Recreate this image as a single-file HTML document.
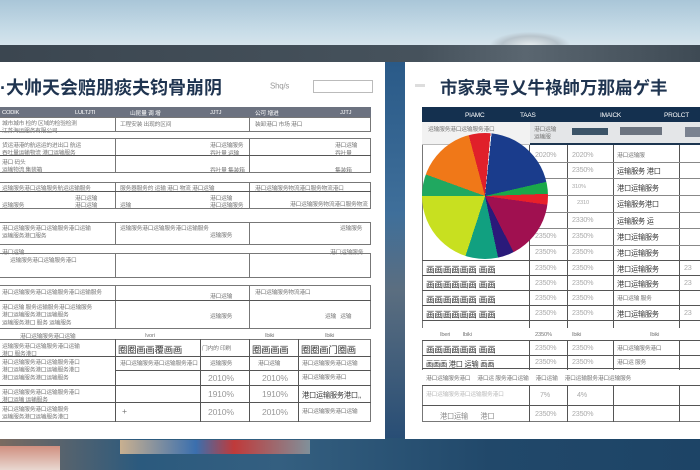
<!DOCTYPE html>
<html><head><meta charset="utf-8"><style>
*{margin:0;padding:0;box-sizing:border-box}
body{width:700px;height:470px;overflow:hidden;position:relative;font-family:"Liberation Sans","Noto Sans CJK SC",sans-serif;background:#1f4b6e}
.a{position:absolute}
.sky{left:0;top:0;width:700px;height:46px;background:linear-gradient(#a9c6d8,#c9dde8 70%,#d6e4ec)}
.band{left:0;top:45px;width:700px;height:18px;background:linear-gradient(90deg,#3b4650,#46525c 60%,#5a6670 75%,#3e4a54)}
.gap{left:385px;top:62px;width:20px;height:380px;background:linear-gradient(#2a5a88,#3f6f9a 40%,#5b6e80 60%,#274d75)}
.water{left:0;top:438px;width:700px;height:32px;background:linear-gradient(90deg,#7a6a60,#2b5a7e 20%,#345f80 40%,#21486a 70%,#1d4466)}
.pan{background:#fff;top:62px;height:377px}
.t{font-size:18px;color:#1f3450;white-space:nowrap;font-weight:bold}
.l{background:#555}
.c{border:1px solid #777;background:#fff}
.x{font-size:8px;color:#777;white-space:nowrap;transform:scale(.72);transform-origin:0 0;letter-spacing:-0.3px}
</style></head><body>
<div class="a sky"></div>
<div class="a" style="left:490px;top:32px;width:80px;height:14px;background:radial-gradient(ellipse at 50% 100%,#e8eef0 0%,#b8c4cc 50%,transparent 72%)"></div>
<div class="a band"></div>
<div class="a gap"></div>
<div class="a water"></div>
<div class="a" style="left:120px;top:440px;width:190px;height:14px;background:linear-gradient(90deg,#c9b090,#3a6fae 40%,#c03a3a 60%,#80909a)"></div>
<div class="a" style="left:0;top:446px;width:60px;height:24px;background:linear-gradient(#d09080,#e8d8d0)"></div>

<!-- left panel -->
<div class="a pan" style="left:0;width:385px"></div>
<div class="a t" style="left:0px;top:74px">·大帅天会赔朋痰夫钧骨崩阴</div>
<div class="a x" style="left:270px;top:82px;font-size:11px;color:#999">Shq/s</div>
<div class="a" style="left:313px;top:80px;width:60px;height:13px;border:1px solid #bbb"></div>
<div class="a" style="left:0;top:107px;width:371px;height:10px;background:#6c7280"></div>
<div class="a x" style="left:2px;top:109px;color:#fff">CODIK</div>
<div class="a x" style="left:75px;top:109px;color:#fff">LULTJTI</div>
<div class="a x" style="left:130px;top:109px;color:#fff">山昆量 调 增</div>
<div class="a x" style="left:210px;top:109px;color:#fff">JJTJ</div>
<div class="a x" style="left:255px;top:109px;color:#fff">公可 增进</div>
<div class="a x" style="left:340px;top:109px;color:#fff">JJTJ</div>
<div class="a c" style="left:-1px;top:117px;width:117px;height:15px"></div>
<div class="a c" style="left:115px;top:117px;width:135px;height:15px"></div>
<div class="a c" style="left:249px;top:117px;width:122px;height:15px"></div>
<div class="a c" style="left:-1px;top:138px;width:117px;height:35px"></div>
<div class="a c" style="left:115px;top:138px;width:135px;height:35px"></div>
<div class="a c" style="left:249px;top:138px;width:122px;height:35px"></div>
<div class="a l" style="left:0;top:155px;width:371px;height:1px"></div>
<div class="a c" style="left:-1px;top:182px;width:117px;height:27px"></div>
<div class="a c" style="left:115px;top:182px;width:135px;height:27px"></div>
<div class="a c" style="left:249px;top:182px;width:122px;height:27px"></div>
<div class="a l" style="left:0;top:191px;width:371px;height:1px"></div>
<div class="a c" style="left:-1px;top:222px;width:117px;height:23px"></div>
<div class="a c" style="left:115px;top:222px;width:135px;height:23px"></div>
<div class="a c" style="left:249px;top:222px;width:122px;height:23px"></div>
<div class="a c" style="left:-1px;top:253px;width:117px;height:25px"></div>
<div class="a c" style="left:115px;top:253px;width:135px;height:25px"></div>
<div class="a c" style="left:249px;top:253px;width:122px;height:25px"></div>
<div class="a c" style="left:-1px;top:285px;width:117px;height:44px"></div>
<div class="a c" style="left:115px;top:285px;width:135px;height:44px"></div>
<div class="a c" style="left:249px;top:285px;width:122px;height:44px"></div>
<div class="a l" style="left:0;top:300px;width:371px;height:1px"></div>
<div class="a x" style="left:2px;top:119px">城市城市 检的 区域的检验检测<br>江苏海运服务有限公司</div>
<div class="a x" style="left:120px;top:120px">工程安装 出现的区间</div>
<div class="a x" style="left:255px;top:120px">装卸港口 市场 港口</div>
<div class="a x" style="left:2px;top:141px">货运港港的航运运的进出口 航运<br>吞吐量运输物流 港口运输服务</div>
<div class="a x" style="left:210px;top:141px">港口运输服务</div><div class="a x" style="left:335px;top:141px">港口运输</div>
<div class="a x" style="left:210px;top:149px">吞吐量 运输</div><div class="a x" style="left:335px;top:149px">吞吐量</div>
<div class="a x" style="left:2px;top:158px">港口 码头<br>运输物流 集装箱</div>
<div class="a x" style="left:210px;top:166px">吞吐量 集装箱</div><div class="a x" style="left:335px;top:166px">集装箱</div>
<div class="a x" style="left:2px;top:184px">运输服务港口运输服务航运运输服务</div>
<div class="a x" style="left:120px;top:184px">服务器服务的 运输 港口 物流 港口运输</div>
<div class="a x" style="left:255px;top:184px">港口运输服务物流港口服务物流港口</div>
<div class="a x" style="left:75px;top:194px">港口运输</div><div class="a x" style="left:210px;top:194px">港口运输</div>
<div class="a x" style="left:2px;top:201px">运输服务</div><div class="a x" style="left:75px;top:201px">港口运输</div>
<div class="a x" style="left:120px;top:201px">运输</div><div class="a x" style="left:210px;top:201px">港口运输服务</div>
<div class="a x" style="left:290px;top:200px">港口运输服务物流港口服务物流</div>
<div class="a x" style="left:2px;top:224px">港口运输服务港口运输服务港口运输<br>运输服务港口服务</div>
<div class="a x" style="left:120px;top:224px">运输服务港口运输服务港口运输服务</div>
<div class="a x" style="left:210px;top:231px">运输服务</div><div class="a x" style="left:340px;top:224px">运输服务</div>
<div class="a x" style="left:2px;top:248px">港口运输</div><div class="a x" style="left:330px;top:248px">港口运输服务</div>
<div class="a x" style="left:10px;top:256px">运输服务港口运输服务港口</div>
<div class="a x" style="left:2px;top:288px">港口运输服务港口运输服务港口运输服务</div>
<div class="a x" style="left:210px;top:292px">港口运输</div><div class="a x" style="left:255px;top:288px">港口运输服务物流港口</div>
<div class="a x" style="left:2px;top:303px">港口运输 服务运输服务港口运输服务<br>港口运输服务港口运输服务<br>运输服务港口 服务 运输服务</div>
<div class="a x" style="left:210px;top:312px">运输服务</div><div class="a x" style="left:325px;top:312px">运输 &nbsp; 运输</div>
<div class="a x" style="left:20px;top:332px">港口运输服务港口运输</div>
<div class="a x" style="left:145px;top:332px">Ivori</div>
<div class="a x" style="left:265px;top:332px">Ibiki</div>
<div class="a x" style="left:325px;top:332px">Ibiki</div>
<div class="a c" style="left:-1px;top:339px;width:372px;height:83px"></div>
<div class="a l" style="left:115px;top:339px;width:1px;height:83px"></div>
<div class="a l" style="left:200px;top:339px;width:1px;height:83px"></div>
<div class="a l" style="left:249px;top:339px;width:1px;height:83px"></div>
<div class="a l" style="left:298px;top:339px;width:1px;height:83px"></div>
<div class="a l" style="left:0;top:356px;width:371px;height:1px"></div>
<div class="a l" style="left:0;top:385px;width:371px;height:1px"></div>
<div class="a l" style="left:0;top:402px;width:371px;height:1px"></div>
<div class="a l" style="left:115px;top:370px;width:256px;height:1px"></div>
<div class="a x" style="left:118px;top:342px;font-size:13px;color:#333">圈圈画画覆画画</div>
<div class="a x" style="left:202px;top:344px">门内的 印刷</div>
<div class="a x" style="left:252px;top:342px;font-size:13px;color:#333">圈画画画</div>
<div class="a x" style="left:301px;top:342px;font-size:13px;color:#333">圈圈画门圈画</div>
<div class="a x" style="left:2px;top:342px">运输服务港口运输服务港口运输<br>港口 服务港口</div>
<div class="a x" style="left:2px;top:358px">港口运输服务港口运输服务港口<br>港口运输服务港口运输服务港口<br>港口运输服务港口运输服务</div>
<div class="a x" style="left:120px;top:359px">港口运输服务港口运输服务港口</div>
<div class="a x" style="left:210px;top:359px">运输服务</div><div class="a x" style="left:258px;top:359px">港口运输</div>
<div class="a x" style="left:302px;top:359px">港口运输服务港口运输</div>
<div class="a x" style="left:208px;top:373px;font-size:12px;color:#999">2010%</div><div class="a x" style="left:262px;top:373px;font-size:12px;color:#999">2010%</div>
<div class="a x" style="left:302px;top:373px">港口运输服务港口</div>
<div class="a x" style="left:2px;top:388px">港口运输服务港口运输服务港口<br>港口运输 运输服务</div>
<div class="a x" style="left:208px;top:389px;font-size:12px;color:#999">1910%</div><div class="a x" style="left:262px;top:389px;font-size:12px;color:#999">1910%</div>
<div class="a x" style="left:302px;top:389px;font-size:10px;color:#333">港口运输服务港口,,</div>
<div class="a x" style="left:2px;top:405px">港口运输服务港口运输服务<br>运输服务港口运输服务港口</div>
<div class="a x" style="left:122px;top:406px;font-size:12px">+</div>
<div class="a x" style="left:208px;top:407px;font-size:12px;color:#999">2010%</div><div class="a x" style="left:262px;top:407px;font-size:12px;color:#999">2010%</div>
<div class="a x" style="left:302px;top:407px">港口运输服务港口运输</div>

<!-- right panel -->
<div class="a pan" style="left:405px;width:295px"></div>
<div class="a" style="left:415px;top:84px;width:10px;height:3px;background:#ddd"></div>
<div class="a t" style="left:440px;top:75px;font-size:17.5px">市家泉号乂牛祿帥万那扁ゲ丰</div>
<div class="a" style="left:422px;top:107px;width:278px;height:15px;background:#14304f"></div>
<div class="a x" style="left:465px;top:111px;color:#fff;font-size:9px">PIAMC</div>
<div class="a x" style="left:520px;top:111px;color:#fff;font-size:9px">TAAS</div>
<div class="a x" style="left:600px;top:111px;color:#fff;font-size:9px">IMAICK</div>
<div class="a x" style="left:664px;top:111px;color:#fff;font-size:9px">PROLCT</div>
<div class="a" style="left:422px;top:122px;width:278px;height:23px;background:#f2f2f2;border-bottom:1px solid #bbb"></div>
<div class="a" style="left:530px;top:122px;width:170px;height:23px;background:#e4e6e8;border-bottom:2px solid #1c3550"></div>
<div class="a" style="left:572px;top:128px;width:36px;height:7px;background:#3c5468"></div>
<div class="a" style="left:620px;top:127px;width:42px;height:8px;background:#6c7480"></div>
<div class="a" style="left:685px;top:127px;width:15px;height:10px;background:#7a8290"></div>
<div class="a x" style="left:428px;top:125px">运输服务港口运输服务港口</div>
<div class="a x" style="left:534px;top:125px">港口运输<br>运输服</div>
<div class="a" style="left:422px;top:145px;width:278px;height:277px;border-left:1px solid #777;border-bottom:1px solid #777"></div>
<div class="a l" style="left:529px;top:145px;width:1px;height:277px"></div>
<div class="a l" style="left:567px;top:145px;width:1px;height:277px"></div>
<div class="a l" style="left:613px;top:145px;width:1px;height:277px"></div>
<div class="a l" style="left:679px;top:145px;width:1px;height:277px"></div>
<div class="a" style="left:530px;top:162px;width:170px;height:1px;background:#888"></div>
<div class="a" style="left:530px;top:178px;width:170px;height:1px;background:#888"></div>
<div class="a" style="left:530px;top:195px;width:170px;height:1px;background:#888"></div>
<div class="a" style="left:530px;top:212px;width:170px;height:1px;background:#888"></div>
<div class="a" style="left:530px;top:228px;width:170px;height:1px;background:#888"></div>
<div class="a" style="left:530px;top:245px;width:170px;height:1px;background:#888"></div>
<div class="a l" style="left:422px;top:260px;width:278px;height:1px"></div>
<div class="a l" style="left:422px;top:275px;width:278px;height:1px"></div>
<div class="a l" style="left:422px;top:290px;width:278px;height:1px"></div>
<div class="a l" style="left:422px;top:305px;width:278px;height:1px"></div>
<div class="a l" style="left:422px;top:320px;width:278px;height:1px"></div>
<div class="a" style="left:422px;top:328px;width:278px;height:12px;background:#fff"></div>
<div class="a l" style="left:422px;top:340px;width:278px;height:1px"></div>
<div class="a l" style="left:422px;top:355px;width:278px;height:1px"></div>
<div class="a l" style="left:422px;top:368px;width:278px;height:1px"></div>
<div class="a" style="left:422px;top:370px;width:278px;height:15px;background:#fff"></div>
<div class="a l" style="left:422px;top:385px;width:278px;height:1px"></div>
<div class="a l" style="left:422px;top:405px;width:278px;height:1px"></div>
<div class="a x" style="left:535px;top:151px;font-size:10px;color:#aaa">2020%</div>
<div class="a x" style="left:572px;top:151px;font-size:10px;color:#aaa">2020%</div>
<div class="a x" style="left:617px;top:151px">港口运输服</div>
<div class="a x" style="left:572px;top:166px;font-size:10px;color:#aaa">2350%</div><div class="a x" style="left:617px;top:165px;font-size:10px;color:#333">运输服务 港口</div>
<div class="a x" style="left:572px;top:183px;color:#aaa">310%</div><div class="a x" style="left:617px;top:182px;font-size:10px;color:#333">港口运输服务</div>
<div class="a x" style="left:577px;top:199px;color:#aaa">2310</div><div class="a x" style="left:617px;top:198px;font-size:10px;color:#333">运输服务港口</div>
<div class="a x" style="left:572px;top:216px;font-size:10px;color:#aaa">2330%</div><div class="a x" style="left:617px;top:215px;font-size:10px;color:#333">运输服务 运</div>
<div class="a x" style="left:535px;top:232px;font-size:10px;color:#aaa">2350%</div><div class="a x" style="left:572px;top:232px;font-size:10px;color:#aaa">2350%</div><div class="a x" style="left:617px;top:231px;font-size:10px;color:#333">港口运输服务</div>
<div class="a x" style="left:535px;top:248px;font-size:10px;color:#aaa">2350%</div><div class="a x" style="left:572px;top:248px;font-size:10px;color:#aaa">2350%</div><div class="a x" style="left:617px;top:247px;font-size:10px;color:#333">港口运输服务</div>
<div class="a x" style="left:426px;top:263px;font-size:12px;color:#333">画画画画画画 画画</div>
<div class="a x" style="left:426px;top:278px;font-size:12px;color:#333">画画画画画画 画画</div>
<div class="a x" style="left:426px;top:293px;font-size:12px;color:#333">画画画画画画 画画</div>
<div class="a x" style="left:426px;top:308px;font-size:12px;color:#333">画画画画画画 画画</div>
<div class="a x" style="left:535px;top:264px;font-size:10px;color:#aaa">2350%</div><div class="a x" style="left:572px;top:264px;font-size:10px;color:#aaa">2350%</div><div class="a x" style="left:617px;top:263px;font-size:10px;color:#333">港口运输服务</div><div class="a x" style="left:684px;top:264px;font-size:10px;color:#aaa">23</div>
<div class="a x" style="left:535px;top:279px;font-size:10px;color:#aaa">2350%</div><div class="a x" style="left:572px;top:279px;font-size:10px;color:#aaa">2350%</div><div class="a x" style="left:617px;top:278px;font-size:10px;color:#333">港口运输服务</div><div class="a x" style="left:684px;top:279px;font-size:10px;color:#aaa">23</div>
<div class="a x" style="left:535px;top:294px;font-size:10px;color:#aaa">2350%</div><div class="a x" style="left:572px;top:294px;font-size:10px;color:#aaa">2350%</div><div class="a x" style="left:617px;top:294px">港口运输 服务</div>
<div class="a x" style="left:535px;top:309px;font-size:10px;color:#aaa">2350%</div><div class="a x" style="left:572px;top:309px;font-size:10px;color:#aaa">2350%</div><div class="a x" style="left:617px;top:308px;font-size:10px;color:#333">港口运输服务</div><div class="a x" style="left:684px;top:309px;font-size:10px;color:#aaa">23</div>
<div class="a x" style="left:440px;top:331px">Iberi &nbsp; &nbsp; &nbsp; &nbsp; Ibiki</div>
<div class="a x" style="left:535px;top:331px">2350%</div><div class="a x" style="left:572px;top:331px">Ibiki</div><div class="a x" style="left:650px;top:331px">Ibiki</div>
<div class="a x" style="left:426px;top:343px;font-size:12px;color:#333">画画画画画画 画画</div>
<div class="a x" style="left:535px;top:344px;font-size:10px;color:#aaa">2350%</div><div class="a x" style="left:572px;top:344px;font-size:10px;color:#aaa">2350%</div><div class="a x" style="left:617px;top:344px">港口运输服务港口</div>
<div class="a x" style="left:426px;top:358px;font-size:10px;color:#333">画画画 港口 运输 画画</div>
<div class="a x" style="left:535px;top:358px;font-size:10px;color:#aaa">2350%</div><div class="a x" style="left:572px;top:358px;font-size:10px;color:#aaa">2350%</div><div class="a x" style="left:617px;top:358px">港口运 服务</div>
<div class="a x" style="left:426px;top:374px">港口运输服务港口 &nbsp; &nbsp; 港口运 服务港口运输 &nbsp; &nbsp; 港口运输 &nbsp; &nbsp; 港口运输服务港口运输服务</div>
<div class="a x" style="left:426px;top:390px;color:#bbb">港口运输服务港口运输服务港口</div>
<div class="a x" style="left:540px;top:391px;font-size:10px;color:#aaa">7%</div><div class="a x" style="left:577px;top:391px;font-size:10px;color:#aaa">4%</div>
<div class="a x" style="left:440px;top:410px;font-size:10px;color:#888">港口运输 &nbsp; &nbsp; &nbsp; 港口</div>
<div class="a x" style="left:535px;top:410px;font-size:10px;color:#aaa">2350%</div><div class="a x" style="left:572px;top:410px;font-size:10px;color:#aaa">2350%</div>
<div class="a" style="left:422px;top:133px;width:126px;height:126px;border-radius:50%;background:conic-gradient(from -15deg,#e0202a 0deg 20deg,#f0f0f0 20deg 21deg,#1a3c8c 21deg 92deg,#1aa84a 92deg 103deg,#e8202a 103deg 113deg,#a01050 113deg 168deg,#2a1a7a 168deg 183deg,#11a080 183deg 213deg,#c8e020 213deg 285deg,#20a860 285deg 305deg,#f07818 305deg 360deg)"></div>
</body></html>
